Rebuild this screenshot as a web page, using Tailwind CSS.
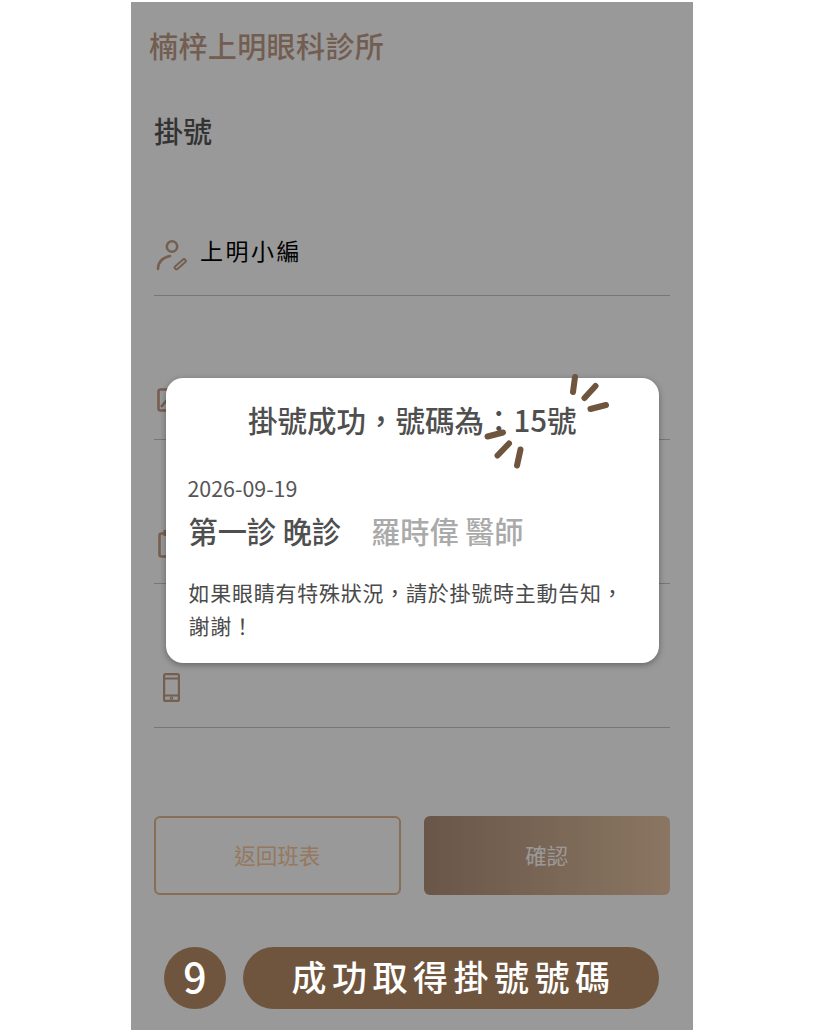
<!DOCTYPE html>
<html lang="zh-Hant">
<head>
    <meta charset="UTF-8">
    <meta name="viewport" content="width=device-width, initial-scale=1.0">
    <title>楠梓上明眼科診所</title>
    <script src="https://cdn.jsdelivr.net/npm/@tailwindcss/browser@4"></script>
</head>
<body class="bg-white font-['Noto_Sans_CJK_TC','Noto_Sans',sans-serif]">
    <div class="relative ml-[131px] mt-[2px] h-[1028px] w-[562px] overflow-hidden bg-white">

        <!-- Registration form -->
        <div class="flex h-full flex-col px-[23px]">
            <h1 class="-ml-[5px] mt-[21px] text-[29px] font-medium leading-[44px] tracking-[.4px] text-[#c09c88]">楠梓上明眼科診所</h1>
            <h2 class="mt-[41px] text-[29px] font-medium leading-[44px] text-[#555555]">掛號</h2>

            <div class="relative flex h-[144px] items-end border-b border-[#c6c6c6] pb-[24px]">
                <svg class="ml-[2px] h-[32px] w-[32px]" viewBox="0 0 32 32" fill="none" stroke="#c49e88" stroke-width="2.600" stroke-linecap="round">
                    <circle cx="16" cy="7.500" r="5.200" />
                    <path d="M2 30c0-6 3-11 12-13" />
                    <path d="M20.500 28.500l7.500-6.500" stroke-width="5.600" />
                    <path d="M20.500 28.500l7.500-6.500" stroke="#ffffff" stroke-width="1.600" />
                </svg>
                <span class="relative -top-[3px] ml-[12px] text-[23px] leading-[36px] tracking-[2.500px] text-black">上明小編</span>
            </div>

            <div class="flex h-[144px] items-end border-b border-[#c6c6c6] pb-[27px]">
                <svg class="ml-[3px] h-[24px] w-[24px]" viewBox="0 0 24 24" fill="none" stroke="#c49e88" stroke-width="2.600">
                    <rect x="1.500" y="1.500" width="21" height="21" rx="2" />
                    <path d="M4 19l6-7" />
                </svg>
            </div>

            <div class="flex h-[144px] items-end border-b border-[#c6c6c6] pb-[25px]">
                <svg class="ml-[4px] h-[29px] w-[24px]" viewBox="0 0 24 29" fill="none" stroke="#c49e88" stroke-width="2.600">
                    <rect x="1.500" y="4.500" width="21" height="23" rx="2" />
                    <path d="M7 1v6" stroke-width="3" />
                </svg>
            </div>

            <div class="flex h-[144px] items-end border-b border-[#c6c6c6] pb-[25px]">
                <svg class="ml-[9px] h-[29px] w-[17px]" viewBox="0 0 17 29" fill="none" stroke="#c49e88" stroke-width="2.200">
                    <rect x="1.100" y="1.100" width="14.800" height="26.800" rx="1.500" />
                    <path d="M1 5.500h15M1 22.500h15" />
                    <circle cx="8.500" cy="25.300" r=".6" />
                </svg>
            </div>

            <div class="mt-[88px] flex gap-[23px]">
                <button class="h-[79px] w-[247px] rounded-[6px] border-2 border-[#e3b78e] bg-white text-[21.500px] text-[#f9c89c]">返回班表</button>
                <button class="h-[79px] w-[247px] rounded-[6px] bg-gradient-to-r from-[#b1907a] to-[#e6c5a3] text-[21.500px] text-white">確認</button>
            </div>
        </div>

        <!-- Dim layer behind the dialog -->
        <div class="absolute inset-0 bg-black/40"></div>

        <!-- Success dialog -->
        <div class="absolute left-[34.500px] top-[376px] h-[285px] w-[493.500px] rounded-[17px] bg-white px-[23px] shadow-[0_2px_6px_rgba(0,0,0,0.35)]">
            <p class="mt-[20px] text-center text-[29.500px] font-medium leading-[42px] text-[#4f4f4f]">掛號成功，號碼為：15號</p>
            <p class="-ml-[1px] mt-[32px] text-[21.400px] leading-[32px] text-[#555555]">2026-09-19</p>
            <p class="mt-[5px] flex text-[29.200px] font-medium leading-[42px] text-[#4f4f4f]">
                <span>第一診 晚診</span>
                <span class="ml-[30px] text-[#aaaaaa]">羅時偉 醫師</span>
            </p>
            <p class="mt-[25px] text-[21px] leading-[33px] tracking-[.75px] text-[#4a4a4a]">如果眼睛有特殊狀況，請於掛號時主動告知，謝謝！</p>
        </div>

        <!-- Sparks around the number -->
        <svg class="absolute left-[349px] top-[368px] h-[104px] w-[136px]" viewBox="480 370 136 104" fill="none" stroke="#6f553e" stroke-width="6" stroke-linecap="round">
            <path d="M575 377l-2 15M595.500 386l-11 12M606 405l-15.500 4" />
            <path d="M503 432.500l-15.500 4M509 443.500l-11.500 12M520.500 449.500l-3.500 16" />
        </svg>

        <!-- Step caption -->
        <div class="absolute left-[33px] top-[945px] flex items-center gap-[17px]">
            <div class="flex h-[62px] w-[62px] items-center justify-center rounded-full bg-[#6f553e] text-[41px] font-medium leading-[54px] text-white">
                <span class="relative -top-[3px]">9</span>
            </div>
            <div class="flex h-[62px] w-[416px] items-center justify-center rounded-full bg-[#6f553e] pb-[3px] pl-[5px] text-[35px] font-medium tracking-[5.500px] text-white">成功取得掛號號碼</div>
        </div>
    </div>
</body>
</html>
